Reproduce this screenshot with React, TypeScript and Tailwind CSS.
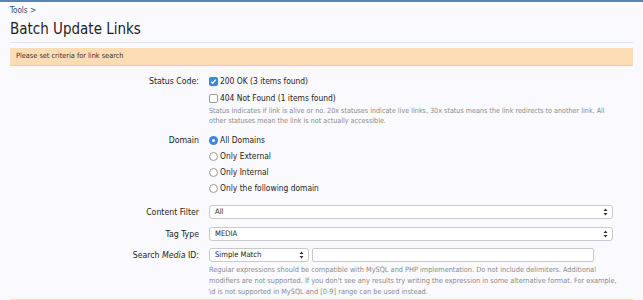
import React from "react";

const font = { fontFamily: '"DejaVu Sans Condensed", "DejaVu Sans", sans-serif' };

const Arrows: React.FC = () => (
  <svg width="5" height="8" viewBox="0 0 5 8" className="shrink-0">
    <path d="M2.5 0.5 L4.5 3 H0.5 Z" fill="#333" />
    <path d="M2.5 7.5 L4.5 5 H0.5 Z" fill="#333" />
  </svg>
);

const Checkbox: React.FC<{ checked?: boolean }> = ({ checked }) =>
  checked ? (
    <span className="w-[9px] h-[9px] rounded-[2px] bg-[#3b87e0] flex items-center justify-center shrink-0">
      <svg width="7" height="7" viewBox="0 0 8 8">
        <path d="M1.5 4.2 L3.2 6 L6.5 1.8" stroke="#fff" strokeWidth="1.5" fill="none" />
      </svg>
    </span>
  ) : (
    <span className="w-[9px] h-[9px] rounded-[2px] bg-white border border-[#9a9a9a] shrink-0" />
  );

const Radio: React.FC<{ checked?: boolean }> = ({ checked }) =>
  checked ? (
    <span className="w-[9px] h-[9px] rounded-full bg-[#3b87e0] flex items-center justify-center shrink-0">
      <span className="w-[3px] h-[3px] rounded-full bg-white" />
    </span>
  ) : (
    <span className="w-[9px] h-[9px] rounded-full bg-white border border-[#9a9a9a] shrink-0" />
  );

const Label: React.FC<{ children: React.ReactNode }> = ({ children }) => (
  <div className="text-right text-[8.7px] text-[#222] leading-[14px]">{children}</div>
);

const SelectBox: React.FC<{ value: string; className?: string }> = ({ value, className }) => (
  <div
    className={
      "h-[14px] bg-white border border-[#c9c9c9] rounded-[3px] flex items-center justify-between pl-[5px] pr-[4px] text-[7.6px] text-[#222] " +
      (className ?? "")
    }
  >
    <span>{value}</span>
    <Arrows />
  </div>
);

const Option: React.FC<{ children: React.ReactNode }> = ({ children }) => (
  <div className="flex items-center gap-[2px] h-[14px] text-[8.4px] text-[#222] whitespace-nowrap">{children}</div>
);

export default function App() {
  const domains = ["All Domains", "Only External", "Only Internal", "Only the following domain"];

  return (
    <div style={font} className="w-full h-[300px] overflow-hidden bg-[#fafafe] border-t-2 border-[#5d84ad]">
      <div className="px-[10px]">
        <div className="pt-[4px] text-[8px] leading-[10px] text-[#2f4d6e]">Tools &gt;</div>
        <h1 className="mt-[4px] text-[15px] leading-[19px] text-[#1e1e1e] pb-[3px] border-b border-[#dde6f0]">
          Batch Update Links
        </h1>
        <div className="mt-[5px] h-[18px] bg-[#fbdcb4] border-b border-[#f3cf9f] flex items-center pl-[6px] text-[7.3px] text-[#333]">
          Please set criteria for link search
        </div>

        <div className="grid grid-cols-[189px_1fr] gap-x-[10px] mt-[8px]">
          <Label>Status Code:</Label>
          <div className="flex flex-col">
            <Option>
              <Checkbox checked />
              200 OK (3 items found)
            </Option>
            <div className="mt-[3px]">
              <Option>
                <Checkbox />
                404 Not Found (1 items found)
              </Option>
            </div>
            <div className="mt-[1px] text-[7.15px] leading-[10px] text-[#8a8a8a] whitespace-nowrap">
              Status indicates if link is alive or no. 20x statuses indicate live links, 30x status means the link redirects to another link. All
              <br />
              other statuses mean the link is not actually accessible.
            </div>
          </div>

          <div className="mt-[7px]">
            <Label>Domain</Label>
          </div>
          <div className="flex flex-col gap-[2px] mt-[7px]">
            {domains.map((d, i) => (
              <Option key={d}>
                <Radio checked={i === 0} />
                {d}
              </Option>
            ))}
          </div>

          <div className="mt-[10px]">
            <Label>Content Filter</Label>
          </div>
          <div className="mt-[10px] pr-[20px]">
            <SelectBox value="All" />
          </div>

          <div className="mt-[8px]">
            <Label>Tag Type</Label>
          </div>
          <div className="mt-[8px] pr-[20px]">
            <SelectBox value="MEDIA" />
          </div>

          <div className="mt-[7px]">
            <Label>
              Search <i>Media</i> ID:
            </Label>
          </div>
          <div className="mt-[7px] flex flex-col">
            <div className="flex gap-[3px]">
              <SelectBox value="Simple Match" className="w-[100px]" />
              <div className="h-[14px] w-[282px] bg-white border border-[#c9c9c9] rounded-[2px]" />
            </div>
            <div className="mt-[2px] text-[7.3px] leading-[11px] text-[#8a8a8a] whitespace-nowrap">
              Regular expressions should be compatible with MySQL and PHP implementation. Do not include delimiters. Additional
              <br />
              modifiers are not supported. If you don't see any results try writing the expression in some alternative format. For example,
              <br />
              \d is not supported in MySQL and [0-9] range can be used instead.
            </div>
          </div>
        </div>

        <div className="mt-[2px] h-[6px] bg-[#fbdcb4]" />
      </div>
    </div>
  );
}
